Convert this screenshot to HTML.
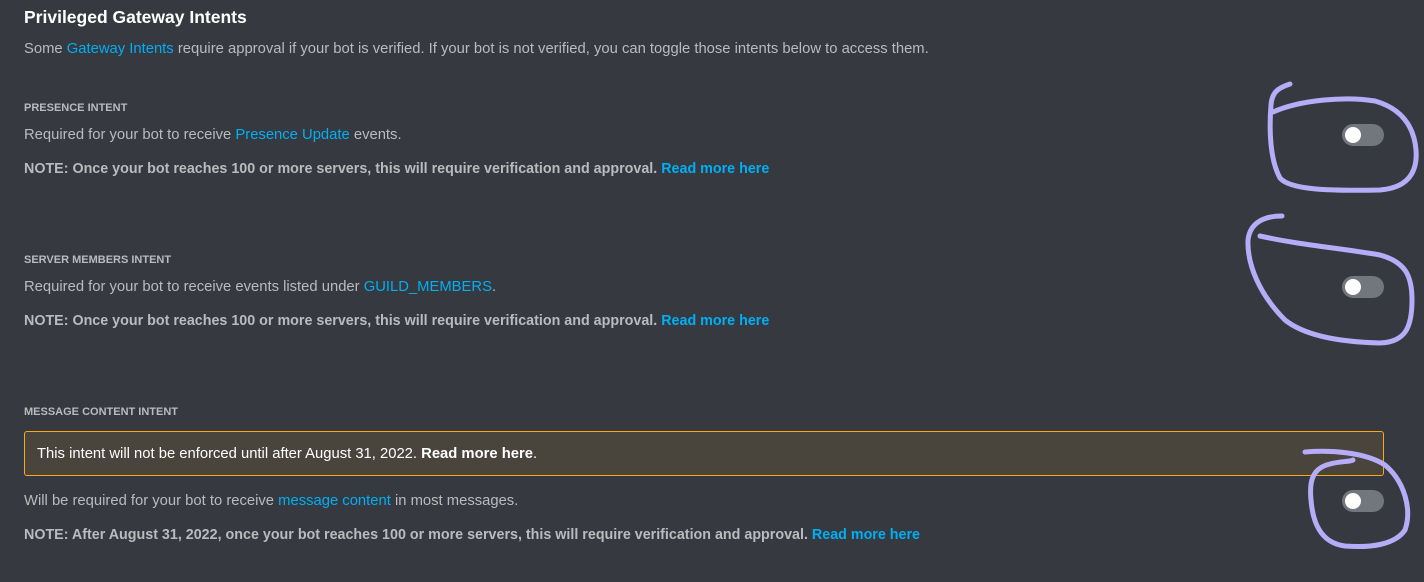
<!DOCTYPE html>
<html><head><meta charset="utf-8"><style>
body{margin:0;width:1424px;height:582px;background:#36393f;font-family:"Liberation Sans",sans-serif;overflow:hidden;position:relative;color:#b9bbbe}
.a{position:absolute;left:24px;white-space:nowrap}
.t{top:7px;font-size:17.5px;font-weight:bold;color:#fff}
.p{font-size:14.8px;color:#b9bbbe}
.h{font-size:11px;font-weight:bold;color:#b9bbbe}
.n{font-size:14.3px;font-weight:bold;color:#b9bbbe}
.l{color:#00aff4}
.box{position:absolute;left:24px;top:431px;width:1360px;height:45px;border:1px solid #faa81a;border-radius:3px;background:#49443c;box-sizing:border-box}
.box span{position:absolute;left:12px;top:14px;font-size:14.8px;color:#fff}
.tg{position:absolute;left:1342px;width:42px;height:22px;border-radius:11px;background:#72767d}
.tg:after{content:"";position:absolute;left:3px;top:3px;width:16px;height:16px;border-radius:50%;background:#fff}
</style></head><body>
<div class="a t">Privileged Gateway Intents</div>
<div class="a p" style="top:41px">Some <span class="l">Gateway Intents</span> require approval if your bot is verified. If your bot is not verified, you can toggle those intents below to access them.</div>
<div class="a h" style="top:102px">PRESENCE INTENT</div>
<div class="a p" style="top:127px">Required for your bot to receive <span class="l">Presence Update</span> events.</div>
<div class="a n" style="top:161px">NOTE: Once your bot reaches 100 or more servers, this will require verification and approval. <span class="l">Read more here</span></div>
<div class="a h" style="top:254px">SERVER MEMBERS INTENT</div>
<div class="a p" style="top:279px">Required for your bot to receive events listed under <span class="l">GUILD_MEMBERS</span>.</div>
<div class="a n" style="top:313px">NOTE: Once your bot reaches 100 or more servers, this will require verification and approval. <span class="l">Read more here</span></div>
<div class="a h" style="top:406px">MESSAGE CONTENT INTENT</div>
<div class="box"><span>This intent will not be enforced until after August 31, 2022. <b>Read more here</b>.</span></div>
<div class="a p" style="top:493px">Will be required for your bot to receive <span class="l">message content</span> in most messages.</div>
<div class="a n" style="top:527px">NOTE: After August 31, 2022, once your bot reaches 100 or more servers, this will require verification and approval. <span class="l">Read more here</span></div>
<div class="tg" style="top:124px"></div>
<div class="tg" style="top:276px"></div>
<div class="tg" style="top:490px"></div>
<svg width="1424" height="582" style="position:absolute;left:0;top:0" fill="none" stroke="#b7acf8" stroke-width="5" stroke-linecap="round" stroke-linejoin="round">
<path d="M1290 84 C1278 88 1272 92 1271 105 C1269 130 1270 160 1280 178 C1290 190 1330 191 1380 190 C1405 188 1418 175 1416 150 C1414 125 1400 108 1375 101 C1345 96 1300 100 1273 112"/>
<path d="M1282 216 C1265 216 1250 222 1248 240 C1247 265 1260 295 1285 320 C1305 336 1340 342 1380 343 C1405 342 1412 328 1412 300 C1412 275 1405 262 1380 255 C1340 248 1300 245 1260 236"/>
<path d="M1305 452 C1330 450 1365 452 1385 465 C1405 482 1412 510 1405 530 C1395 545 1370 548 1345 546 C1322 543 1313 525 1311 500 C1309 480 1313 468 1330 464 C1340 461 1350 462 1353 460"/>
</svg>
</body></html>
